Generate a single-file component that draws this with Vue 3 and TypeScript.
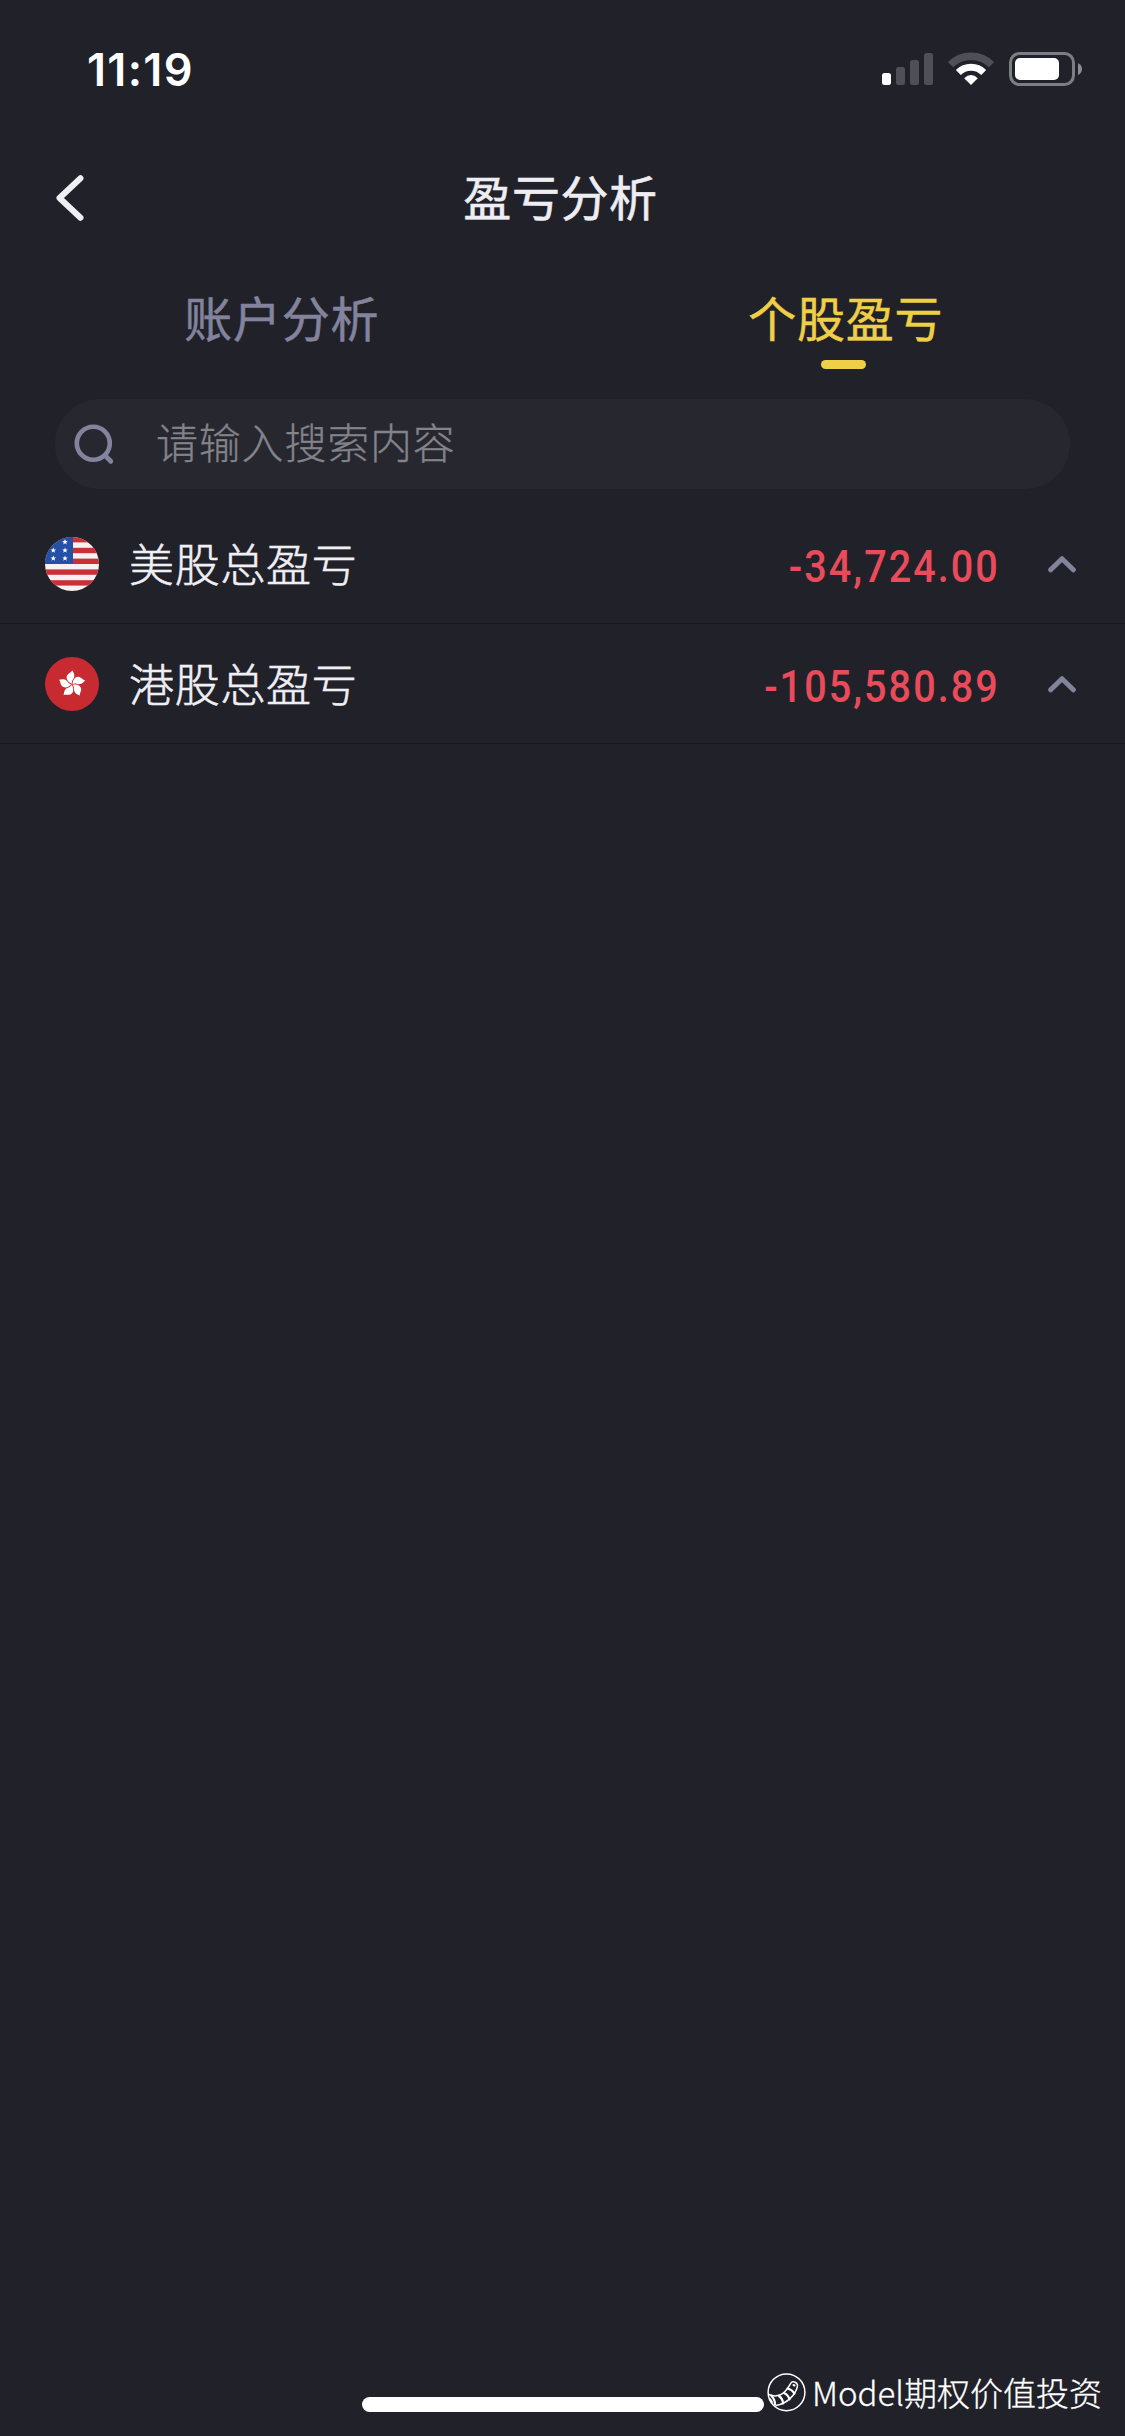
<script setup lang="ts">
interface Market {
  id: 'us' | 'hk'
  name: string
  total: string
}

const tabs = [
  { label: '账户分析', active: false },
  { label: '个股盈亏', active: true },
]

const markets: Market[] = [
  { id: 'us', name: '美股总盈亏', total: '-34,724.00' },
  { id: 'hk', name: '港股总盈亏', total: '-105,580.89' },
]

const redStripes = [0, 10.8, 21.6, 32.4, 43.2]
const stars = [[20, 5], [8.3, 13.3], [20, 13.3], [8.3, 21.3], [20, 21.3]]
const petals = [0, 72, 144, 216, 288]
</script>

<template>
  <div class="screen">
    <header class="status">
      <span class="time">11:19</span>
      <div class="indicators">
        <svg class="signal" width="51" height="34" viewBox="0 0 51 34">
          <rect x="0" y="21" width="9" height="12" rx="2.5" fill="#fff" />
          <rect x="14" y="15" width="9" height="18" rx="2.5" fill="#4f4f58" />
          <rect x="28" y="8" width="9" height="25" rx="2.5" fill="#4f4f58" />
          <rect x="42" y="1" width="9" height="32" rx="2.5" fill="#4f4f58" />
        </svg>
        <svg class="wifi" width="46" height="34" viewBox="0 0 46 34">
          <path d="M2.5 12.7A29 29 0 0 1 43.5 12.7" fill="none" stroke="#4f4f58" stroke-width="7.4" />
          <path d="M10.3 20.5A18 18 0 0 1 35.7 20.5" fill="none" stroke="#fff" stroke-width="7" />
          <path d="M23 33L16.2 26.2Q19.4 23 23 23Q26.600 23 29.800 26.2Z" fill="#fff" />
        </svg>
        <svg class="battery" width="74" height="34" viewBox="0 0 74 34">
          <rect x="1.500" y="1.500" width="63" height="31" rx="9" fill="none" stroke="#7d7d84" stroke-width="3" />
          <rect x="6" y="6" width="44" height="22" rx="5" fill="#fff" />
          <path d="M69 11Q73 13 73 17T69 23Z" fill="#8c8c92" />
        </svg>
      </div>
    </header>

    <nav class="nav">
      <svg class="back" width="28" height="46" viewBox="0 0 28 46">
        <path d="M24.500 3.300L3.500 23L24.500 42.700" fill="none" stroke="#efeff4" stroke-width="6" stroke-linecap="round" stroke-linejoin="round" />
      </svg>
      <h1>盈亏分析</h1>
    </nav>

    <div class="tabs">
      <div v-for="t in tabs" :key="t.label" class="tab" :class="{ active: t.active }">
        <span class="label">{{ t.label }}</span>
        <i class="mark"></i>
      </div>
    </div>

    <div class="search">
      <svg width="42" height="42" viewBox="0 0 42 42">
        <circle cx="19.300" cy="19.300" r="16.500" fill="none" stroke="#83839d" stroke-width="4.600" />
        <path d="M31 31.500L36.800 37.300" stroke="#83839d" stroke-width="4.800" stroke-linecap="round" />
      </svg>
      <span>请输入搜索内容</span>
    </div>

    <main>
      <div v-for="m in markets" :key="m.id" class="row">
        <svg v-if="m.id === 'us'" class="flag" width="54" height="54" viewBox="0 0 54 54">
          <clipPath id="disc"><circle cx="27" cy="27" r="27" /></clipPath>
          <g clip-path="url(#disc)">
            <rect width="54" height="54" fill="#f7f2f1" />
            <rect v-for="y in redStripes" :key="y" :y="y" width="54" height="5.400" fill="#ca3038" />
            <rect width="28" height="27" fill="#2450a8" />
            <path
              v-for="(s, i) in stars" :key="i" :transform="`translate(${s[0]} ${s[1]})`" fill="#fff"
              d="M0-2.900L.8-.9L2.800-.9L1.200.4L1.800 2.400L0 1.200L-1.800 2.400L-1.200.4L-2.800-.9L-.8-.9Z"
            />
          </g>
        </svg>
        <svg v-else class="flag" width="54" height="54" viewBox="0 0 54 54">
          <circle cx="27" cy="27" r="27" fill="#c72b31" />
          <g transform="translate(27 27.300)">
            <g v-for="a in petals" :key="a" :transform="`rotate(${a})`">
              <path d="M0-.6C-4-2-6.800-6-4.600-9.300C-3.300-11.300-1-11.600.4-13.700C1.100-12 2.600-10.500 2.300-7.800C2-5-.8-4 0-.6Z" fill="#fff" />
            </g>
          </g>
        </svg>
        <span class="name">{{ m.name }}</span>
        <span class="total">{{ m.total }}</span>
        <svg class="chevron" width="28" height="18" viewBox="0 0 28 18">
          <path d="M2.700 14.800L14 3.700L25.300 14.800" fill="none" stroke="#83839b" stroke-width="5" stroke-linecap="round" stroke-linejoin="round" />
        </svg>
      </div>
    </main>

    <footer class="footer">
      <div class="home"></div>
      <div class="credit">
        <svg width="40" height="40" viewBox="0 0 40 40" fill="none" stroke="#fff" stroke-width="1.500" stroke-linecap="round">
          <circle cx="19.500" cy="19.300" r="18.400" />
          <path d="M1.800 21.500C7 23.600 13 23 17 19.500C20.500 16.500 22 13.500 23.500 10.700C25.500 7 31.500 9.500 30.300 14C28.500 21 21 30.500 9 32.500" />
          <path d="M4 22.500Q8 26 8 31.500M12 23Q16 26 16 30.500M17 20Q21.500 22 22.500 26.500M20.500 15.500Q25 16.500 27.500 20.500" stroke-width="2.200" />
          <path d="M3 26L5 29M26.500 12L27.500 12.500" stroke-width="2" />
        </svg>
        <span>Model期权价值投资</span>
      </div>
    </footer>
  </div>
</template>

<style>
body {
  background: #21212a;
}
</style>

<style scoped>
.screen {
  display: flex;
  flex-direction: column;
  width: 1125px;
  height: 2436px;
  overflow: hidden;
  background: #21212a;
  font-family: "Noto Sans CJK SC", sans-serif;
}

.status {
  display: flex;
  justify-content: space-between;
  align-items: flex-start;
  height: 132px;
  padding: 52px 42px 0 87px;
  box-sizing: border-box;
}

.time {
  font: 600 45px/35px Inter, sans-serif;
  letter-spacing: 1.3px;
  color: #fff;
}

.indicators {
  display: flex;
}

.wifi {
  margin-left: 15px;
}

.battery {
  margin-left: 15px;
}

.nav {
  display: flex;
  align-items: center;
  height: 132px;
  padding-left: 56px;
}

.back {
  flex: none;
}

h1 {
  flex: 1;
  margin: 0 88px 7px 0;
  text-align: center;
  font-size: 48px;
  line-height: 70px;
  font-weight: 400;
  letter-spacing: 0.6px;
  -webkit-text-stroke: 0.6px #ededf2;
  color: #ededf2;
}

.tabs {
  display: flex;
  height: 135px;
}

.tab {
  flex: 1;
  display: flex;
  flex-direction: column;
  align-items: center;
  padding-top: 17px;
  color: #83839d;
}

.label {
  font-size: 48px;
  line-height: 70px;
  font-weight: 400;
  letter-spacing: 0.7px;
  padding-left: 1px;
  -webkit-text-stroke: 0.5px currentColor;
}

.mark {
  width: 45px;
  height: 9px;
  margin-top: 9px;
  border-radius: 5px;
}

.active {
  color: #efcf47;
}

.active .label {
  padding-left: 4px;
}

.active .mark {
  background: #efcf47;
}

.search {
  display: flex;
  align-items: center;
  height: 90px;
  margin: 0 55px 15px;
  padding-left: 19px;
  border-radius: 45px;
  background: #272730;
}

.search svg {
  margin-top: 2px;
}

.search span {
  margin: 0 0 6px 40px;
  font-size: 42px;
  line-height: 60px;
  font-weight: 300;
  letter-spacing: 0.8px;
  -webkit-text-stroke: 0.3px currentColor;
  color: #83838a;
}

.row {
  display: flex;
  align-items: center;
  height: 120px;
  padding: 0 49px 0 45px;
  box-sizing: border-box;
  border-bottom: 1px solid #17171f;
}

.name {
  flex: 1;
  margin: 0 0 2px 30px;
  font-size: 45px;
  line-height: 66px;
  font-weight: 300;
  letter-spacing: 0.7px;
  -webkit-text-stroke: 0.6px currentColor;
  color: #efeff4;
}

.total {
  margin-top: 6px;
  font: 500 45px/60px Roboto, sans-serif;
  letter-spacing: 2.3px;
  transform: scaleX(0.88);
  transform-origin: right;
  color: #ea4b5b;
}

.chevron {
  margin-left: 48px;
}

.footer {
  display: flex;
  align-items: flex-start;
  margin-top: auto;
  height: 64px;
  padding-left: 362px;
}

.home {
  width: 402px;
  height: 15px;
  margin-top: 25px;
  border-radius: 8px;
  background: #fff;
}

.credit {
  display: flex;
  align-items: flex-start;
  margin-left: 3px;
  color: #fff;
}

.credit svg {
  margin-top: 1px;
}

.credit span {
  margin: -4px 0 0 5px;
  font-size: 33px;
  line-height: 48px;
  font-weight: 300;
  -webkit-text-stroke: 0.3px #fff;
  white-space: nowrap;
}
</style>
